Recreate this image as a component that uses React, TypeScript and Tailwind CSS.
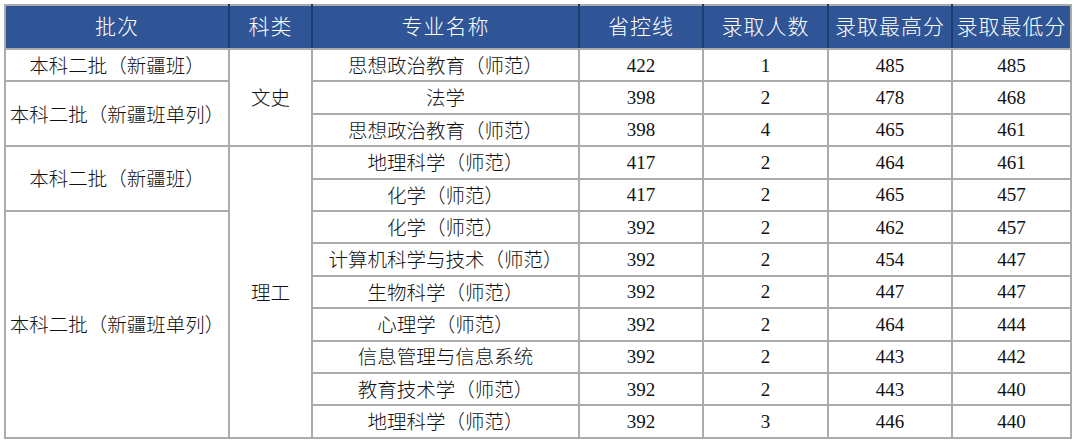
import React from 'react';

// admission score table, 2 subject groups
const headers = ['批次', '科类', '专业名称', '省控线', '录取人数', '录取最高分', '录取最低分'];
const widths = ['w-[224px]', 'w-[83px]', 'w-[267px]', 'w-[124px]', 'w-[125px]', 'w-[124px]', 'w-[119px]'];

type Row = {
  batch?: { text: string; span: number };
  kind?: { text: string; span: number };
  major: string;
  line: number;
  count: number;
  max: number;
  min: number;
};

const rows: Row[] = [
  { batch: { text: '本科二批（新疆班）', span: 1 }, kind: { text: '文史', span: 3 }, major: '思想政治教育（师范）', line: 422, count: 1, max: 485, min: 485 },
  { batch: { text: '本科二批（新疆班单列）', span: 2 }, major: '法学', line: 398, count: 2, max: 478, min: 468 },
  { major: '思想政治教育（师范）', line: 398, count: 4, max: 465, min: 461 },
  { batch: { text: '本科二批（新疆班）', span: 2 }, kind: { text: '理工', span: 9 }, major: '地理科学（师范）', line: 417, count: 2, max: 464, min: 461 },
  { major: '化学（师范）', line: 417, count: 2, max: 465, min: 457 },
  { batch: { text: '本科二批（新疆班单列）', span: 7 }, major: '化学（师范）', line: 392, count: 2, max: 462, min: 457 },
  { major: '计算机科学与技术（师范）', line: 392, count: 2, max: 454, min: 447 },
  { major: '生物科学（师范）', line: 392, count: 2, max: 447, min: 447 },
  { major: '心理学（师范）', line: 392, count: 2, max: 464, min: 444 },
  { major: '信息管理与信息系统', line: 392, count: 2, max: 443, min: 442 },
  { major: '教育技术学（师范）', line: 392, count: 2, max: 443, min: 440 },
  { major: '地理科学（师范）', line: 392, count: 3, max: 446, min: 440 },
];

const cell = 'border-2 border-[#ababab] text-center align-middle p-0 whitespace-nowrap';
const textCell = cell + ' text-[19.5px] font-light pt-[3px]';

export default function App() {
  return (
    <div className="w-[1080px] h-[442px] bg-white pt-[4px] pl-[4px] font-['Liberation_Serif','Noto_Sans_CJK_SC',serif] text-[#111]">
      <table className="border-collapse table-fixed w-[1067px] text-[19px] leading-none">
        <colgroup>
          {widths.map((w, i) => (
            <col key={i} className={w} />
          ))}
        </colgroup>
        <thead>
          <tr className="h-[44px] bg-[#2f5597]">
            {headers.map((h, i) => (
              <th
                key={h}
                className={
                  'border-y-2 border-y-[#ababab] border-x-2 text-white font-light text-[21px] tracking-[1px] text-center align-middle ' +
                  (i === 0 ? 'border-l-[#ababab] ' : 'border-l-[#1f3b70] ') +
                  (i === headers.length - 1 ? 'border-r-[#ababab]' : 'border-r-[#1f3b70]')
                }
              >
                {h}
              </th>
            ))}
          </tr>
        </thead>
        <tbody>
          {rows.map((r, i) => (
            <tr key={i} className="h-[32.4px]">
              {r.batch && (
                <td rowSpan={r.batch.span} className={textCell}>
                  {r.batch.text}
                </td>
              )}
              {r.kind && (
                <td rowSpan={r.kind.span} className={textCell}>
                  {r.kind.text}
                </td>
              )}
              <td className={textCell}>{r.major}</td>
              <td className={cell}>{r.line}</td>
              <td className={cell}>{r.count}</td>
              <td className={cell}>{r.max}</td>
              <td className={cell}>{r.min}</td>
            </tr>
          ))}
        </tbody>
      </table>
    </div>
  );
}
